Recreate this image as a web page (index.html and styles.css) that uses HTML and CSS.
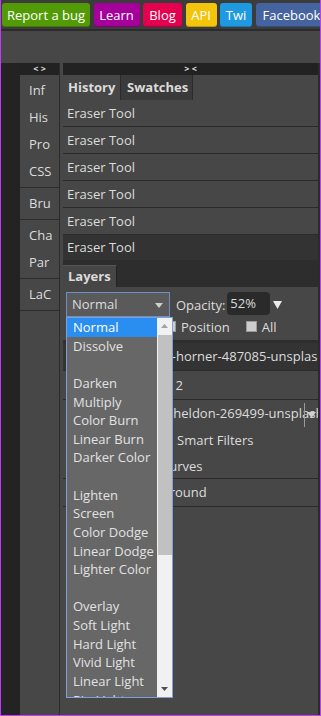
FILE: index.html
```html
<!DOCTYPE html>
<html>
<head>
<meta charset="utf-8">
<link rel="stylesheet" href="styles.css">
</head>
<body>
<header class="topbar">
  <a class="btn btn-bug">Report a bug</a>
  <a class="btn btn-learn">Learn</a>
  <a class="btn btn-blog">Blog</a>
  <a class="btn btn-api">API</a>
  <a class="btn btn-twi">Twi</a>
  <a class="btn btn-fb">Facebook</a>
</header>
<div class="toolbar"></div>
<div class="workspace">
  <div class="strip"></div>
  <nav class="side">
    <div class="side-head">&lt; &gt;</div>
    <div class="side-group">
      <div class="side-item">Inf</div>
      <div class="side-item">His</div>
      <div class="side-item">Pro</div>
      <div class="side-item">CSS</div>
    </div>
    <div class="side-group">
      <div class="side-item">Bru</div>
    </div>
    <div class="side-group">
      <div class="side-item">Cha</div>
      <div class="side-item">Par</div>
    </div>
    <div class="side-group">
      <div class="side-item">LaC</div>
    </div>
  </nav>
  <main class="main">
    <div class="main-head">&gt; &lt;</div>
    <div class="tabs">
      <div class="tab tab-history">History</div>
      <div class="tab tab-swatches">Swatches</div>
    </div>
    <div class="history">
      <div class="hrow">Eraser Tool</div>
      <div class="hrow">Eraser Tool</div>
      <div class="hrow">Eraser Tool</div>
      <div class="hrow">Eraser Tool</div>
      <div class="hrow">Eraser Tool</div>
      <div class="hrow hrow-current">Eraser Tool</div>
    </div>
    <div class="tabs-dark">
      <div class="tab-layers">Layers</div>
    </div>
    <div class="layer-controls">
      <div class="ctrl-row">
        <div class="select">Normal
          <svg class="select-arrow" width="8" height="5" viewBox="0 0 8 5"><polygon points="0,0 8,0 4,5" fill="#cfcfcf"/></svg>
        </div>
        <span class="opacity-label">Opacity:</span>
        <span class="opacity-input">52%</span>
        <svg class="opacity-arrow" width="9" height="8" viewBox="0 0 9 8"><polygon points="0,0 9,0 4.5,8" fill="#ececec"/></svg>
      </div>
      <div class="lock-row">
        <span class="cb"></span><span class="cb-label">Position</span>
        <span class="cb cb-all"></span><span class="cb-label">All</span>
      </div>
    </div>
    <div class="layer-list">
      <div class="lrow lrow-sel"><span class="lname ln-1">jeremy-horner-487085-unsplash</span></div>
      <div class="lrow lrow-2"><span class="lname ln-2">Layer 2</span></div>
      <div class="lgroup">
        <div class="grow grow-a"><span class="lname ln-3">tim-sheldon-269499-unsplash</span>
          <span class="expander"><svg width="9" height="6" viewBox="0 0 9 6"><polygon points="0,0 9,0 4.5,6" fill="#d0d0d0"/></svg></span>
        </div>
        <div class="grow grow-a"><span class="lname ln-4">Smart Filters</span></div>
        <div class="grow grow-b"><span class="lname ln-5">Curves</span></div>
      </div>
      <div class="lrow"><span class="lname ln-6">Background</span></div>
    </div>
  </main>
</div>
<div class="blend-menu">
  <div class="blend-options">
    <div class="opt opt-sel">Normal</div>
    <div class="opt">Dissolve</div>
    <div class="opt"></div>
    <div class="opt">Darken</div>
    <div class="opt">Multiply</div>
    <div class="opt">Color Burn</div>
    <div class="opt">Linear Burn</div>
    <div class="opt">Darker Color</div>
    <div class="opt"></div>
    <div class="opt">Lighten</div>
    <div class="opt">Screen</div>
    <div class="opt">Color Dodge</div>
    <div class="opt">Linear Dodge</div>
    <div class="opt">Lighter Color</div>
    <div class="opt"></div>
    <div class="opt">Overlay</div>
    <div class="opt">Soft Light</div>
    <div class="opt">Hard Light</div>
    <div class="opt">Vivid Light</div>
    <div class="opt">Linear Light</div>
    <div class="opt">Pin Light</div>
    <div class="opt">Hard Mix</div>
  </div>
  <div class="blend-scroll">
    <svg class="sb-up" width="7" height="4" viewBox="0 0 7 4"><polygon points="0,4 7,4 3.5,0" fill="#a3a3a3"/></svg>
    <div class="sb-thumb"></div>
    <svg class="sb-down" width="7" height="4" viewBox="0 0 7 4"><polygon points="0,0 7,0 3.5,4" fill="#505050"/></svg>
  </div>
</div>
</body>
</html>
```

FILE: styles.css
```css
* { box-sizing: border-box; }
html, body { margin: 0; padding: 0; }
body {
  position: relative;
  width: 321px;
  height: 716px;
  border: 1px solid #c13df5;
  border-top: 0;
  background: #474747;
  font-family: "Open Sans", "DejaVu Sans", sans-serif;
  font-size: 13px;
  color: #dcdcdc;
  overflow: hidden;
  display: flex;
  flex-direction: column;
}

/* top link bar */
.topbar {
  flex: none;
  height: 31px;
  background: #3c3c3c;
  border-bottom: 2px solid #2b2b2b;
  display: flex;
  gap: 3.5px;
  padding: 3px 0 0 1px;
  overflow: hidden;
}
.btn {
  flex: none;
  height: 24px;
  line-height: 24px;
  border-radius: 3px;
  color: #fff;
  text-align: center;
  white-space: nowrap;
  box-shadow: inset 0 -1px 0 rgba(0,0,0,0.22);
}
.btn-bug { width: 88px; background: #529b06; }
.btn-learn { width: 46px; background: #a6009b; }
.btn-blog { width: 39px; background: #e4004e; }
.btn-api { width: 31px; background: #f2c40c; }
.btn-twi { width: 32px; background: #1f9ae0; }
.btn-fb { width: 72px; background: #45639f; }

.toolbar { flex: none; height: 32px; background: #474747; }

.workspace { flex: 1; display: flex; min-height: 0; }
.strip { flex: none; width: 19px; background: #232323; }

/* side panel */
.side {
  flex: none;
  width: 40px;
  border-right: 1px solid #2b2b2b;
  background: #474747;
}
.side-head {
  height: 12px;
  background: #222;
  font-size: 9px;
  font-weight: 700;
  line-height: 12px;
  text-align: center;
  color: #ddd;
}
.side-group { padding: 2px 0; border-bottom: 1px solid #2d2d2d; }
.side-item { height: 27px; line-height: 27px; padding-left: 9px; }

/* main panel */
.main {
  flex: 1;
  min-width: 0;
  margin-left: 3px;
  border-right: 2px solid #2b2b2b;
  display: flex;
  flex-direction: column;
}
.main-head {
  flex: none;
  height: 12px;
  background: #222;
  font-size: 9px;
  font-weight: 700;
  line-height: 12px;
  text-align: center;
  color: #ddd;
}
.tabs { flex: none; height: 25px; display: flex; background: #474747; }
.tab { height: 25px; line-height: 25px; font-weight: 700; white-space: nowrap; }
.tab-history { width: 57px; padding-left: 5px; }
.tab-swatches {
  width: 73px;
  padding-left: 6px;
  background: #3a3a3a;
  border-left: 1px solid #2b2b2b;
  border-right: 1px solid #2b2b2b;
}
.history { flex: none; }
.hrow {
  height: 27px;
  line-height: 26px;
  padding-left: 4px;
  border-bottom: 1px solid #2b2b2b;
}
.hrow-current { height: 25px; line-height: 25px; border-bottom: 0; background: #333; }

.tabs-dark { flex: none; height: 27px; padding-top: 5px; background: #2d2d2d; }
.tab-layers {
  width: 54px;
  height: 22px;
  line-height: 21px;
  padding-left: 5px;
  font-weight: 700;
  background: #464646;
  border-top: 1px solid #555;
  border-right: 1px solid #222;
}

.layer-controls { flex: none; padding: 5px 0 6px 3px; }
.ctrl-row { display: flex; align-items: center; height: 25px; }
.select {
  position: relative;
  width: 104px;
  height: 25px;
  line-height: 23px;
  padding-left: 5px;
  border: 1px solid #6e8ec8;
  background: #5a5a5a;
}
.select-arrow { position: absolute; right: 6px; top: 10px; }
.opacity-label { margin-left: 6px; }
.opacity-input {
  align-self: flex-start;
  margin-left: 2px;
  width: 43px;
  height: 23px;
  line-height: 23px;
  padding-left: 3px;
  background: #2a2a2a;
  border-radius: 4px;
}
.opacity-arrow { margin-left: 3px; }
.lock-row {
  display: flex;
  align-items: center;
  height: 13px;
  margin-top: 3px;
  padding-left: 99px;
}
.cb {
  width: 11px;
  height: 11px;
  background: #cdcdcd;
  border: 1px solid #9a9a9a;
}
.cb-label { margin-left: 5px; }
.cb-all { margin-left: 16px; }

.layer-list { flex: 1; border-top: 3px solid #2e2e2e; margin-top: 1px; }
.lrow {
  position: relative;
  height: 28px;
  line-height: 27px;
  border-bottom: 1px solid #2b2b2b;
  white-space: nowrap;
  overflow: hidden;
}
.lrow-sel { background: #333; }
.lrow-2 { height: 29px; line-height: 28px; }
.lgroup { border-bottom: 1px solid #2b2b2b; }
.grow { position: relative; white-space: nowrap; overflow: hidden; }
.grow-a { height: 27px; line-height: 27px; }
.grow-b { height: 24px; line-height: 25px; }
.lname { display: block; }
.ln-1 { padding-left: 67px; }
.ln-2 { padding-left: 76px; }
.ln-3 { padding-left: 80px; }
.ln-4 { padding-left: 114px; }
.ln-5 { padding-left: 98px; }
.ln-6 { padding-left: 71px; }
.expander {
  position: absolute;
  right: 0;
  top: 3px;
  width: 14px;
  height: 24px;
  border-left: 1px solid #9a9a9a;
  display: flex;
  align-items: center;
  justify-content: center;
}

/* open blend-mode list (overlays the layers panel) */
.blend-menu {
  position: absolute;
  left: 65px;
  top: 317px;
  width: 107px;
  height: 381px;
  border: 1px solid #7f9fd6;
  background: #676767;
  display: flex;
}
.blend-options { flex: 1; overflow: hidden; }
.opt {
  height: 18.63px;
  line-height: 18.63px;
  padding-left: 6px;
  color: #e2e2e2;
  white-space: nowrap;
}
.opt-sel { background: #2a8ef0; color: #fff; }
.blend-scroll { position: relative; flex: none; width: 15px; background: #f1f1f1; }
.sb-up { position: absolute; left: 4px; top: 6px; }
.sb-thumb { position: absolute; left: 1px; top: 17px; width: 14px; height: 220px; background: #c1c1c1; }
.sb-down { position: absolute; left: 4px; top: 369px; }
```
